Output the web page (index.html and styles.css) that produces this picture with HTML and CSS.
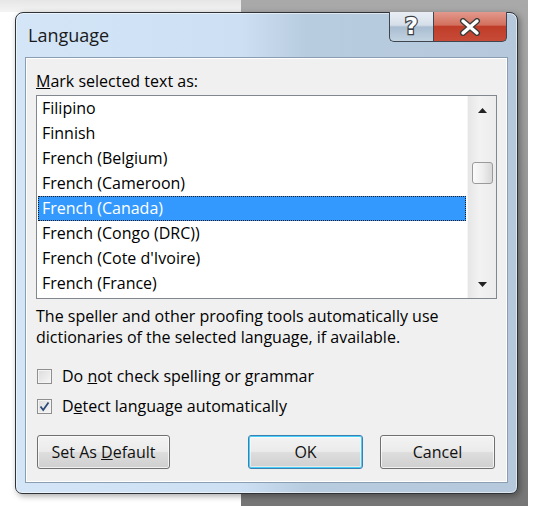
FILE: index.html
```html
<!DOCTYPE html>
<html>
<head>
<meta charset="utf-8">
<link rel="stylesheet" href="styles.css">
</head>
<body>
<div class="stage">
  <div class="window">
    <div class="titlebar">
      <span class="title">Language</span>
      <div class="caption">
        <div class="cap help">?</div>
        <div class="cap close">
          <svg width="24" height="18" viewBox="0 0 24 18">
            <path d="M5 3 L19 15 M19 3 L5 15" stroke="#3a3a3a" stroke-width="6" stroke-linecap="round"/>
            <path d="M5 3 L19 15 M19 3 L5 15" stroke="#ffffff" stroke-width="3.4" stroke-linecap="round"/>
          </svg>
        </div>
      </div>
    </div>
    <div class="client">
      <div class="label"><u>M</u>ark selected text as:</div>
      <div class="listbox">
        <div class="items">
          <div class="item">Filipino</div>
          <div class="item">Finnish</div>
          <div class="item">French (Belgium)</div>
          <div class="item">French (Cameroon)</div>
          <div class="item selected">French (Canada)</div>
          <div class="item">French (Congo (DRC))</div>
          <div class="item">French (Cote d'Ivoire)</div>
          <div class="item">French (France)</div>
        </div>
        <div class="scrollbar">
          <div class="arrow">
            <svg width="9" height="5" viewBox="0 0 9 5"><path d="M0 5 L4.5 0 L9 5 Z" fill="#222"/></svg>
          </div>
          <div class="track"><div class="thumb"></div></div>
          <div class="arrow">
            <svg width="9" height="5" viewBox="0 0 9 5"><path d="M0 0 L4.5 5 L9 0 Z" fill="#222"/></svg>
          </div>
        </div>
      </div>
      <p class="desc">The speller and other proofing tools automatically use<br>dictionaries of the selected language, if available.</p>
      <div class="checks">
        <div class="check"><span class="box"></span><span>Do <u>n</u>ot check spelling or grammar</span></div>
        <div class="check"><span class="box">
          <svg width="13" height="13" viewBox="0 0 13 13"><path d="M2.5 6.5 L5.2 10 L10.5 2.5" fill="none" stroke="#2b4a7a" stroke-width="1.8"/></svg>
        </span><span>D<u>e</u>tect language automatically</span></div>
      </div>
      <div class="buttons">
        <button class="btn wide">Set As <u>D</u>efault</button>
        <div class="spacer"></div>
        <button class="btn primary">OK</button>
        <button class="btn">Cancel</button>
      </div>
    </div>
  </div>
</div>
</body>
</html>
```

FILE: styles.css
```css
html, body {
  margin: 0;
  padding: 0;
}
body {
  width: 533px;
  height: 506px;
  overflow: hidden;
  background: #ffffff;
  font-family: "Open Sans", "Noto Sans", "DejaVu Sans", sans-serif;
  color: #000;
}
.stage {
  width: 533px;
  height: 506px;
  box-sizing: border-box;
  padding: 12px 0 0 15px;
  background:
    linear-gradient(to bottom, #a9a9a9, #8c8c8c 60%, #767676) no-repeat 241px 0 / 287px 506px,
    linear-gradient(to bottom, #e6e6e6, #f4f4f4) no-repeat 0 0 / 241px 12px,
    #ffffff;
}
.window {
  width: 503px;
  height: 482px;
  box-sizing: border-box;
  border: 1px solid #2f3338;
  border-radius: 8px 8px 7px 7px;
  padding: 0 9px 10px 9px;
  background: linear-gradient(to right, #d3e5f7 0%, #cde0f3 45%, #b8ccdf 58%, #b6c9dc 100%);
  box-shadow: 2px 2px 6px rgba(0,0,0,0.35), inset 0 0 0 1px rgba(255,255,255,0.55);
  display: flex;
  flex-direction: column;
}
.titlebar {
  height: 44px;
  display: flex;
  align-items: center;
  justify-content: space-between;
}
.title {
  padding-left: 3px;
  font-size: 18px;
  color: #1a1a1a;
  margin-top: -1px;
}
.caption {
  align-self: flex-start;
  margin-top: -1px;
  margin-right: 1px;
  display: flex;
  height: 30px;
}
.cap {
  box-sizing: border-box;
  height: 30px;
  border: 1px solid #3f4650;
  border-top: none;
  display: flex;
  align-items: center;
  justify-content: center;
}
.help {
  width: 44px;
  border-right: none;
  border-radius: 0 0 0 5px;
  background: linear-gradient(to bottom, #e9eef4 0%, #d6dfe9 45%, #a9bdd1 52%, #c2d2e1 100%);
  font-family: "DejaVu Sans", sans-serif;
  font-weight: bold;
  font-size: 23px;
  line-height: 1;
  color: #ffffff;
  -webkit-text-stroke: 2.4px #3b3f46;
  paint-order: stroke fill;
}
.close {
  width: 74px;
  border-radius: 0 0 5px 0;
  background: linear-gradient(to bottom, #e2998c 0%, #d2705e 45%, #bf3d29 50%, #c74b37 100%);
}
.client {
  flex: 1;
  box-sizing: border-box;
  border: 1px solid #8b9db0;
  box-shadow: inset 0 0 0 1px #ffffff;
  background: #f0f0f0;
  padding: 13px 10px 0 10px;
  font-size: 16px;
}
.label {
  height: 20px;
  line-height: 20px;
}
.listbox {
  margin-top: 4px;
  width: 461px;
  height: 204px;
  box-sizing: border-box;
  border: 1px solid #82878f;
  background: #ffffff;
  display: flex;
}
.items {
  flex: 1;
  padding: 0 1px;
}
.item {
  height: 25px;
  line-height: 25px;
  padding-left: 4px;
  white-space: nowrap;
  color: #000;
}
.item.selected {
  background: #3399ff;
  color: #ffffff;
  outline: 1px dotted #1a1a1a;
  outline-offset: -1px;
}
.scrollbar {
  width: 28px;
  background: linear-gradient(to right, #e6e6e6, #f2f2f2 40%, #ececec);
  border-left: 1px solid #f6f6f6;
  display: flex;
  flex-direction: column;
}
.arrow {
  height: 28px;
  display: flex;
  align-items: center;
  justify-content: center;
}
.track {
  flex: 1;
  padding-top: 38px;
  display: flex;
  justify-content: center;
}
.thumb {
  width: 21px;
  height: 22px;
  box-sizing: border-box;
  border: 1px solid #9a9a9a;
  border-radius: 3px;
  background: linear-gradient(to right, #fbfbfb, #eeeeee 50%, #d8d8d8);
}
.desc {
  margin: 7px 0 0 0;
  line-height: 21px;
}
.checks {
  margin-top: 17px;
  display: flex;
  flex-direction: column;
  gap: 8px;
}
.check {
  height: 22px;
  display: flex;
  align-items: center;
  gap: 10px;
}
.box {
  width: 15px;
  height: 15px;
  margin-left: 1px;
  box-sizing: border-box;
  border: 1px solid #8f8f8f;
  background: linear-gradient(135deg, #dcdcdc, #f6f6f6);
  box-shadow: inset 0 0 0 1px #f4f4f4;
  display: flex;
  align-items: center;
  justify-content: center;
}
.buttons {
  margin-top: 18px;
  display: flex;
  gap: 17px;
  padding: 0 2px 0 1px;
}
.spacer {
  flex: 1;
}
.btn {
  height: 34px;
  width: 115px;
  box-sizing: border-box;
  border: 1px solid #707070;
  border-radius: 3px;
  background: linear-gradient(to bottom, #f3f3f3 0%, #ebebeb 48%, #dddddd 52%, #cfcfcf 100%);
  box-shadow: inset 0 0 0 1px rgba(255,255,255,0.7);
  font-family: "Open Sans", "Noto Sans", sans-serif;
  font-size: 16px;
  color: #111;
  padding: 0;
}
.btn.wide {
  width: 133px;
}
.btn.primary {
  border-color: #3c7fb1;
  box-shadow: inset 0 0 0 1px #48d0f6, inset 0 0 0 2px rgba(255,255,255,0.5);
}
```
